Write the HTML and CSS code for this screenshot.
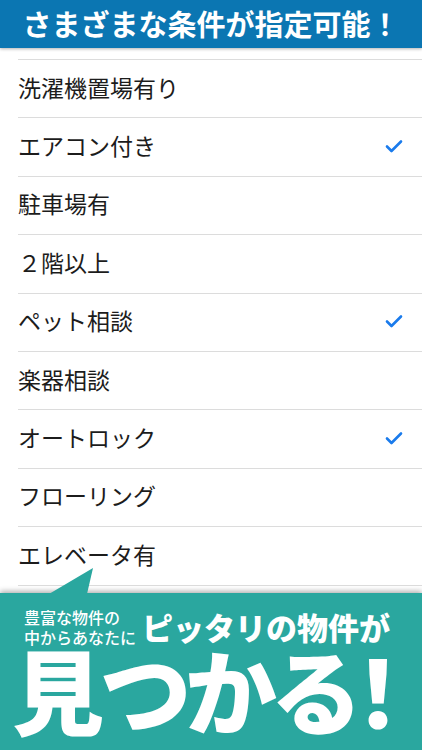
FILE: index.html
```html
<!DOCTYPE html>
<html lang="ja">
<head>
    <meta charset="UTF-8">
    <meta name="viewport" content="width=device-width, initial-scale=1.0">
    <title>条件指定</title>
    <link rel="stylesheet" href="styles.css">
</head>
<body>
    <div id="screen">
        <h1 class="title">さまざまな条件が指定可能！</h1>

        <ul class="conditions">
            <li><span>洗濯機置場有り</span></li>
            <li><span>エアコン付き</span><svg class="check" viewBox="0 0 18 14"><polyline points="2,7.5 6.5,12 16,2.5"/></svg></li>
            <li><span>駐車場有</span></li>
            <li><span>２階以上</span></li>
            <li><span>ペット相談</span><svg class="check" viewBox="0 0 18 14"><polyline points="2,7.5 6.5,12 16,2.5"/></svg></li>
            <li><span>楽器相談</span></li>
            <li><span>オートロック</span><svg class="check" viewBox="0 0 18 14"><polyline points="2,7.5 6.5,12 16,2.5"/></svg></li>
            <li><span>フローリング</span></li>
            <li><span>エレベータ有</span></li>
            <li></li>
        </ul>

        <div class="promo">
            <svg class="tail" viewBox="0 0 46 26"><polygon points="0,26 44,0 38,26"/></svg>
            <div class="promo_top">
                <p class="lead">豊富な物件の<br>中からあなたに</p>
                <p class="catch">ピッタリの物件が</p>
            </div>
            <p class="big">見つかる！</p>
        </div>
    </div>
</body>
</html>
```

FILE: styles.css
```css
* {
    margin: 0;
    padding: 0;
}

body {
    font-family: "Noto Sans CJK JP", "Noto Sans", sans-serif;
    background: #fff;
}

#screen {
    width: 422px;
    height: 750px;
    display: flex;
    flex-direction: column;
    overflow: hidden;
}

.title {
    flex: none;
    height: 48px;
    line-height: 46px;
    background: #0b76b2;
    color: #fff;
    font-size: 29px;
    font-weight: 700;
    text-align: center;
    box-shadow: 0 1px 3px rgba(0, 0, 0, 0.3);
    position: relative;
    z-index: 2;
}

.conditions {
    flex: 1;
    min-height: 0;
    overflow: hidden;
    padding-top: 11px;
}

.conditions li {
    list-style: none;
    height: 57.4px;
    margin-left: 18px;
    padding-right: 19px;
    border-top: 1px solid #dcdcdc;
    display: flex;
    align-items: center;
    justify-content: space-between;
    font-size: 23px;
    color: #1c1c1c;
}

.conditions li span {
    margin-top: -4px;
}

.check {
    width: 18px;
    height: 14px;
    margin-top: -2px;
    fill: none;
    stroke: #1a7bec;
    stroke-width: 2.6;
    stroke-linecap: round;
    stroke-linejoin: round;
}

.promo {
    flex: none;
    height: 157px;
    background: #2aa79f;
    color: #fff;
    position: relative;
    box-shadow: 0 -2px 5px rgba(0, 0, 0, 0.3);
    padding: 14px 0 0 24px;
    box-sizing: border-box;
}

.tail {
    position: absolute;
    left: 49px;
    top: -25px;
    width: 46px;
    height: 26px;
    fill: #2aa79f;
}

.promo_top {
    display: flex;
    align-items: flex-end;
    gap: 6px;
}

.lead {
    font-size: 16px;
    line-height: 20px;
    font-weight: 500;
}

.catch {
    font-size: 31px;
    line-height: 34px;
    font-weight: 900;
    margin-bottom: 3px;
}

.big {
    font-size: 92px;
    line-height: 86px;
    font-weight: 900;
    letter-spacing: -3px;
    margin-left: -12px;
    margin-top: -2px;
    font-feature-settings: "palt";
}
```
